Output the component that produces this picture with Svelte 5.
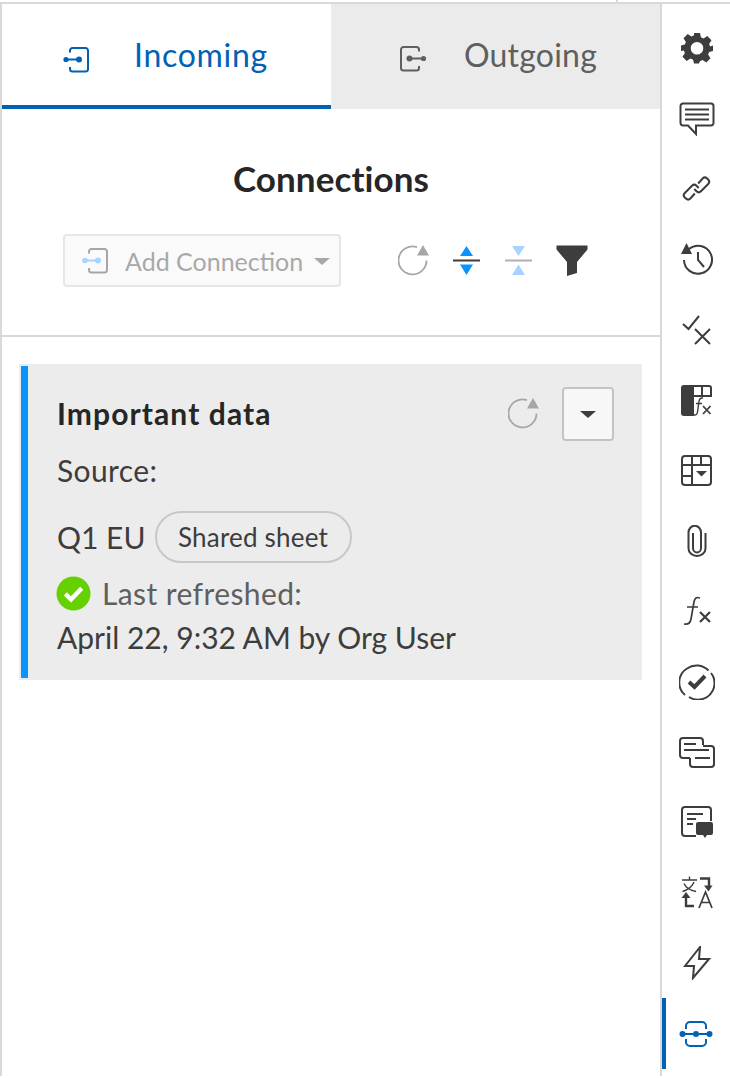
<script>
  const railCount = 15;
</script>

{#snippet refresh(cls)}
  <svg class={cls} viewBox="0 0 32 32" width="32" height="32" fill="none">
    <path d="M19 2.200A14 14 0 1 0 28.500 15.500" stroke="#a6a6a6" stroke-width="1.800"/>
    <path d="M19 10.500 25 0 31 10.500Z" fill="#a6a6a6"/>
  </svg>
{/snippet}

<div class="page">
  <div class="topstrip"><span class="tick"></span></div>
  <div class="frame">
    <main class="panel">
      <div class="tabs">
        <div class="tab active">
          <svg viewBox="0 0 28 26" width="28" height="26" fill="none" stroke="#0061b5" stroke-width="2">
            <path d="M7 5.500V3.500A2.500 2.500 0 0 1 9.500 1H22.500A2.500 2.500 0 0 1 25 3.500V22A2.500 2.500 0 0 1 22.500 24.500H9.500A2.500 2.500 0 0 1 7 22V20"/>
            <path d="M3 12.500H16"/>
            <circle cx="3" cy="12.500" r="2.600" fill="#0061b5" stroke="none"/>
            <circle cx="16" cy="12.500" r="3" fill="#0061b5" stroke="none"/>
          </svg>
          <span>Incoming</span>
        </div>
        <div class="tab">
          <svg viewBox="0 0 28 26" width="28" height="26" fill="none" stroke="#5f5f5f" stroke-width="2">
            <path d="M20 5.500V3.500A2.500 2.500 0 0 0 17.500 1H4.500A2.500 2.500 0 0 0 2 3.500V22A2.500 2.500 0 0 0 4.500 24.500H17.500A2.500 2.500 0 0 0 20 22V20"/>
            <path d="M11 12.500H25"/>
            <circle cx="10.500" cy="12.500" r="3" fill="#5f5f5f" stroke="none"/>
            <circle cx="24.500" cy="12.500" r="2.600" fill="#5f5f5f" stroke="none"/>
          </svg>
          <span>Outgoing</span>
        </div>
      </div>

      <header class="head">
        <h1>Connections</h1>
        <div class="tools">
          <div class="add">
            <svg viewBox="0 0 28 26" width="28" height="26" fill="none" stroke="#a6a6a6" stroke-width="2">
              <path d="M7 5.500V3.500A2.500 2.500 0 0 1 9.500 1H22.500A2.500 2.500 0 0 1 25 3.500V22A2.500 2.500 0 0 1 22.500 24.500H9.500A2.500 2.500 0 0 1 7 22V20"/>
              <path d="M3 12.500H16" stroke="#a6d3ff"/>
              <circle cx="3" cy="12.500" r="2.800" fill="#a6d3ff" stroke="none"/>
              <circle cx="16" cy="12.500" r="3" fill="#a6d3ff" stroke="none"/>
            </svg>
            <span>Add Connection</span>
            <i class="caret light"></i>
          </div>
          <div class="iconset">
            {@render refresh("ic-refresh")}
            <svg viewBox="0 0 27 30" width="27" height="30" class="ic-exp">
              <path d="M13.500 0 20 10H7Z" fill="#0a94fb"/>
              <rect x="0" y="13.500" width="27" height="2" fill="#3d3d3d"/>
              <path d="M7 18.500H20L13.500 29Z" fill="#0a94fb"/>
            </svg>
            <svg viewBox="0 0 27 30" width="27" height="30" class="ic-col">
              <path d="M7 0H20L13.500 10Z" fill="#a6d3ff"/>
              <rect x="0" y="13.500" width="27" height="2" fill="#b0b0b0"/>
              <path d="M13.500 18.500 20 29H7Z" fill="#a6d3ff"/>
            </svg>
            <svg viewBox="0 0 32 32" width="32" height="32" class="ic-fil">
              <path d="M0.500 0.500H31.500V4.500L21 17V28L11 31V17L0.500 4.500Z" fill="#3d3d3d"/>
            </svg>
          </div>
        </div>
      </header>

      <section class="list">
        <article class="card">
          <div class="card-top">
            <h2>Important data</h2>
            <div class="card-actions">
              {@render refresh("ic-refresh")}
              <button class="menu" aria-label="Menu"><i class="caret"></i></button>
            </div>
          </div>
          <p class="source">Source:</p>
          <div class="sheet"><span>Q1 EU</span><span class="pill">Shared sheet</span></div>
          <div class="status">
            <svg viewBox="0 0 36 36" width="35" height="35">
              <circle cx="18" cy="18" r="17.500" fill="#66d100"/>
              <path d="M9.500 18.500 15.500 24 26.500 12.500" fill="none" stroke="#fff" stroke-width="4.500"/>
            </svg>
            <span>Last refreshed:</span>
          </div>
          <p class="when">April 22, 9:32 AM by Org User</p>
        </article>
      </section>
    </main>

    <nav class="rail">
      <div class="item">
        <svg viewBox="0 0 32 32" width="32" height="32">
          <path fill="#3d3d3d" fill-rule="evenodd" d="M13 1h6l.9 4.300 2.700 1.100 3.700-2.400 4.200 4.200-2.400 3.700 1.100 2.700L32 13.500v5.500l-3.800.9-1.100 2.700 2.400 3.700-4.200 4.200-3.700-2.400-2.700 1.100L18 31.500h-5l-.9-3.800-2.700-1.100-3.700 2.400-4.200-4.200 2.400-3.700-1.100-2.700L0 19v-5.500l3.800-.9 1.100-2.700L2.500 6.200l4.200-4.200 3.700 2.400 2.700-1.100zM16 10a6.300 6.300 0 1 0 0 12.600A6.300 6.300 0 0 0 16 10z"/>
        </svg>
      </div>
      <div class="item">
        <svg viewBox="0 0 36 34" width="36" height="34" fill="none" stroke="#3d3d3d" stroke-width="2">
          <path d="M4 1.500H32A2.500 2.500 0 0 1 34.500 4V21A2.500 2.500 0 0 1 32 23.500H17V32L9 23.500H4A2.500 2.500 0 0 1 1.500 21V4A2.500 2.500 0 0 1 4 1.500Z"/>
          <path d="M6 7.500H30M6 12.500H30M6 17.500H30"/>
        </svg>
      </div>
      <div class="item">
        <svg viewBox="0 0 26 26" width="29" height="29" fill="none" stroke="#3d3d3d" stroke-width="1.800">
          <path d="M11.500 17.500 7.500 22Q5.500 24 3.500 22L2.500 21Q0.500 19 2.500 17L9 10.500Q11 8.500 13 10.500L15 12.500"/>
          <path d="M14.500 8.500 18.500 4Q20.500 2 22.500 4L23.500 5Q25.500 7 23.500 9L17 15.500Q15 17.500 13 15.500L11 13.500"/>
        </svg>
      </div>
      <div class="item">
        <svg viewBox="0 0 32 32" width="32" height="32" fill="none" stroke="#3d3d3d" stroke-width="2">
          <path d="M8 6A14 14 0 1 1 3 17"/>
          <path d="M17 9V17L23 24"/>
          <path d="M0 11 5.500 0 11 11Z" fill="#3d3d3d" stroke="none"/>
        </svg>
      </div>
      <div class="item">
        <svg viewBox="0 0 30 30" width="30" height="30" fill="none" stroke="#3d3d3d" stroke-width="2">
          <path d="M1 9 6.500 14 17 1"/>
          <path d="M13 14 28 29M28 14 13 29"/>
        </svg>
      </div>
      <div class="item">
        <svg viewBox="0 0 31 31" width="31" height="31" fill="none" stroke="#3d3d3d" stroke-width="2">
          <path d="M3 1H12V30H3A2 2 0 0 1 1 28V3A2 2 0 0 1 3 1Z" fill="#3d3d3d"/>
          <path d="M12 1H28A2 2 0 0 1 30 3V11H12Z"/>
          <path d="M21 1V11M12 11V16M12 24V30"/>
          <path d="M22 13Q18.500 12.500 18 16.500L16.500 27Q16 30.500 13 30M15 18.500H21" stroke-width="1.400"/>
          <path d="M22 21 29.500 29M29.500 21 22 29" stroke-width="1.800"/>
        </svg>
      </div>
      <div class="item">
        <svg viewBox="0 0 31 31" width="31" height="31" fill="none" stroke="#3d3d3d" stroke-width="2">
          <rect x="1" y="1" width="29" height="29" rx="3"/>
          <path d="M1 10H30M1 21H11M11 1V30M20 1V10"/>
          <path d="M15 16H26L20.500 21.500Z" fill="#3d3d3d" stroke="none"/>
        </svg>
      </div>
      <div class="item">
        <svg viewBox="0 0 20 32" width="20" height="32" fill="none" stroke="#3d3d3d" stroke-width="2">
          <path d="M18.500 8V23.500A8.500 7.500 0 0 1 1.500 23.500V7.500A6 6.500 0 0 1 14 7.500V23A4 4.500 0 0 1 6 23V8"/>
        </svg>
      </div>
      <div class="item">
        <svg viewBox="0 0 28 30" width="28" height="30" fill="none" stroke="#3d3d3d">
          <path d="M17 2Q12 0 11 6L8 23Q7 29 1 28M4 11H15" stroke-width="1.700"/>
          <path d="M17 16 27 26M27 16 17 26" stroke-width="2.200"/>
        </svg>
      </div>
      <div class="item">
        <svg viewBox="0 0 36 36" width="36" height="36" fill="none" stroke="#3d3d3d" stroke-width="2">
          <path d="M29.500 6.500A16.500 16.500 0 0 0 8 4.500 16.500 16.500 0 0 0 6 31M10 33A16.500 16.500 0 0 0 32 9"/>
          <path d="M10 18 15.500 23 26 12" stroke-width="4"/>
        </svg>
      </div>
      <div class="item">
        <svg viewBox="0 0 36 31" width="36" height="31" fill="none" stroke="#3d3d3d" stroke-width="2">
          <path d="M24 8V4A3 3 0 0 0 21 1H4A3 3 0 0 0 1 4V18A3 3 0 0 0 4 21H11"/>
          <path d="M5 7H17M5 13H30M5 13H10"/>
          <path d="M11 21V27A3 3 0 0 0 14 30H32A3 3 0 0 0 35 27V12A3 3 0 0 0 32 9H24"/>
          <path d="M16 21H31"/>
        </svg>
      </div>
      <div class="item">
        <svg viewBox="0 0 32 32" width="32" height="32" fill="none" stroke="#3d3d3d" stroke-width="2">
          <path d="M15 30H4A3 3 0 0 1 1 27V4A3 3 0 0 1 4 1H27A3 3 0 0 1 30 4V15"/>
          <path d="M6 8H22M6 13H15M6 18H12"/>
          <path d="M17 16H30A2 2 0 0 1 32 18V27A2 2 0 0 1 30 29H26L24 32 22 29H17A2 2 0 0 1 15 27V18A2 2 0 0 1 17 16Z" fill="#3d3d3d" stroke="none"/>
        </svg>
      </div>
      <div class="item">
        <svg viewBox="0 0 32 33" width="32" height="33" fill="none" stroke="#3d3d3d" stroke-width="1.400">
          <path d="M1 4H16M8.500 0.500V4M3 7.500Q6 14 15 15.500M13 6Q10 13 1.500 15.500"/>
          <path d="M19 2.500H28V12" stroke-width="2.400"/>
          <path d="M23.500 10H32L28 16Z" fill="#3d3d3d" stroke="none" transform="translate(-.5 -.5)"/>
          <path d="M13 30H5V22" stroke-width="2.400"/>
          <path d="M.500 22H9.500L5 16Z" fill="#3d3d3d" stroke="none"/>
          <path d="M18 32 24.500 16 31 32M20 26.500H29" stroke-width="1.700"/>
        </svg>
      </div>
      <div class="item">
        <svg viewBox="0 0 28 34" width="28" height="34" fill="none" stroke="#3d3d3d" stroke-width="2">
          <path d="M17 1 2 20H11L10 32 26 13H16Z"/>
        </svg>
      </div>
      <div class="item on">
        <svg viewBox="0 0 34 26" width="34" height="26" fill="none" stroke="#0061b5" stroke-width="2">
          <path d="M7 8V5A4 4 0 0 1 11 1H23A4 4 0 0 1 27 5V8M7 18V21A4 4 0 0 0 11 25H23A4 4 0 0 0 27 21V18"/>
          <path d="M3 13H31"/>
          <circle cx="3.500" cy="13" r="3" fill="#0061b5" stroke="none"/>
          <circle cx="17" cy="13" r="3" fill="#0061b5" stroke="none"/>
          <circle cx="30.500" cy="13" r="3" fill="#0061b5" stroke="none"/>
        </svg>
      </div>
    </nav>
  </div>
</div>

<style>
  :global(body) { margin: 0; background: #fff; }
  .page { width: 730px; height: 1078px; overflow: hidden; font-family: Lato, "Liberation Sans", sans-serif; color: #262626; }
  .topstrip { height: 2px; padding-left: 616px; }
  .tick { display: block; width: 2px; height: 2px; background: #d9d9d9; }
  .frame { display: flex; border-top: 2px solid #d9d9d9; height: 1072px; }
  .panel { width: 658px; height: 1072px; border-left: 2px solid #d9d9d9; flex: none; }
  .tabs { display: flex; height: 105px; }
  .tab { width: 329px; box-sizing: border-box; height: 105px; background: #ebebeb; display: flex; align-items: center; gap: 37px; padding: 0 0 5px 68px; color: #5f5f5f; font-size: 32px; letter-spacing: .2px; }
  .tab.active { background: #fff; border-bottom: 4px solid #0061b5; color: #0061b5; padding-left: 61px; padding-bottom: 0; gap: 43px; letter-spacing: .7px; }
  .tab svg { flex: none; margin-top: 10px; }
  .head { height: 228px; box-sizing: border-box; border-bottom: 2px solid #d9d9d9; }
  h1 { margin: 0; text-align: center; font-size: 35px; line-height: 40px; font-weight: 700; padding-top: 49px; color: #262626; letter-spacing: .1px; }
  .tools { display: flex; align-items: flex-start; margin-top: 36px; padding-left: 61px; }
  .add { box-sizing: border-box; width: 278px; height: 53px; background: #fafafa; border: 2px solid #e6e6e6; border-radius: 4px; display: flex; align-items: center; padding-left: 17px; color: #a8a8a8; font-size: 25px; }
  .add svg { flex: none; margin-right: 15px; }
  .add span { white-space: nowrap; }
  .caret { display: block; width: 0; height: 0; border-left: 8px solid transparent; border-right: 8px solid transparent; border-top: 7px solid #3d3d3d; }
  .caret.light { border-top-color: #a8a8a8; margin-left: 11px; margin-top: 1px; flex: none; }
  .iconset { display: flex; align-items: center; height: 53px; margin-left: 57px; }
  .ic-exp { margin-left: 23px; }
  .ic-col { margin-left: 25px; }
  .ic-fil { margin-left: 24px; }
  .list { padding: 27px 18px 0 17px; }
  .card { box-sizing: border-box; height: 316px; width: 623px; background: #ececec; border: 2px solid #ececec; position: relative; padding: 0 0 0 36px; }
  .card::before { content: ""; position: absolute; left: 0; top: 0; bottom: 0; width: 7px; background: #0a94fb; }
  .card-top { display: flex; justify-content: space-between; height: 72px; padding-right: 26px; padding-top: 21px; box-sizing: border-box; }
  h2 { margin: 0; font-size: 30px; line-height: 52px; font-weight: 700; color: #262626; letter-spacing: 1.1px; }
  .card-actions { display: flex; align-items: center; height: 54px; gap: 22px; }
  .menu { box-sizing: border-box; width: 52px; height: 54px; padding: 0; background: #f7f7f7; border: 2px solid #c3c3c3; border-radius: 4px; display: flex; align-items: center; justify-content: center; }
  .source { margin: 0; font-size: 30px; line-height: 36px; color: #3d3d3d; padding-top: 14px; letter-spacing: .4px; }
  .sheet { display: flex; align-items: center; margin-top: 23px; font-size: 30px; color: #3d3d3d; height: 52px; gap: 9px; }
  .pill { box-sizing: border-box; height: 52px; width: 197px; border: 2px solid #c8c8c8; border-radius: 26px; display: flex; align-items: center; justify-content: center; font-size: 26px; letter-spacing: .2px; }
  .status { display: flex; align-items: center; gap: 11px; height: 36px; margin-top: 12px; margin-left: -1px; font-size: 30px; color: #5f5f5f; letter-spacing: .4px; }
  .status svg { flex: none; }
  .when { margin: 0; font-size: 30px; line-height: 44px; color: #3d3d3d; padding-top: 4px; }
  .rail { padding-top: 9px; border-left: 2px solid #d9d9d9; width: 68px; height: 1072px; box-sizing: border-box; flex: none; }
  .item { height: 70.4px; display: flex; align-items: center; justify-content: center; box-sizing: border-box; padding-left: 3px; }
  .item.on { border-left: 4px solid #0061b5; padding-left: 0; padding-right: 2px; }
</style>
